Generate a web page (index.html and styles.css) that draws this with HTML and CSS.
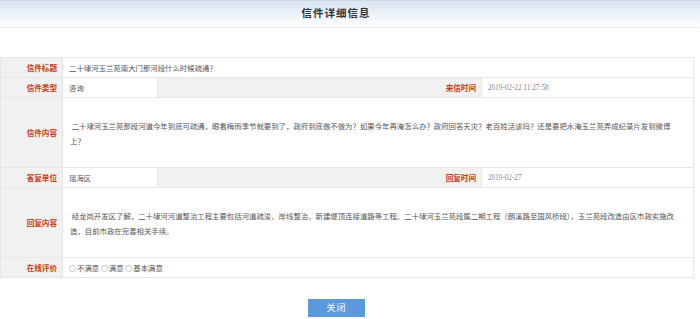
FILE: index.html
```html
<!DOCTYPE html>
<html lang="zh-CN">
<head>
    <meta charset="UTF-8" />
    <title>信件详细信息</title>
    <link rel="stylesheet" href="styles.css">
</head>
<body>
<div class="head">信件详细信息</div>

<table class="detail">
    <colgroup>
        <col style="width:62px">
        <col style="width:95px">
        <col style="width:324px">
        <col>
    </colgroup>
    <tr class="row-s">
        <th>信件标题</th>
        <td colspan="3">二十埭河玉兰苑南大门那河段什么时候疏通？</td>
    </tr>
    <tr class="row-s">
        <th>信件类型</th>
        <td>咨询</td>
        <th>来信时间</th>
        <td class="date">2019-02-22 11:27:58</td>
    </tr>
    <tr class="row-l">
        <th>信件内容</th>
        <td colspan="3" class="text">&nbsp;二十埭河玉兰苑那段河道今年到底可疏通，眼看梅雨季节就要到了，政府到底做不做为？如果今年再淹怎么办？政府回答天灾？老百姓活该吗？还是要把水淹玉兰苑弄成纪录片发到微博上？</td>
    </tr>
    <tr class="row-s">
        <th>答复单位</th>
        <td>瑶海区</td>
        <th>回复时间</th>
        <td class="date">2019-02-27</td>
    </tr>
    <tr class="row-l">
        <th>回复内容</th>
        <td colspan="3" class="text">&nbsp;经龙岗开发区了解，二十埭河河道整治工程主要包括河道疏浚、岸线整治、新建堤顶连接道路等工程。二十埭河玉兰苑段属二期工程（朗溪路至国风桥段），玉兰苑段改造由区市政实施改造，目前市政在完善相关手续。</td>
    </tr>
    <tr class="row-s">
        <th>在线评价</th>
        <td colspan="3" class="rate">
            <label><input type="radio" name="rate">不满意</label>
            <label><input type="radio" name="rate">满意</label>
            <label><input type="radio" name="rate">基本满意</label>
        </td>
    </tr>
</table>

<div class="actions">
    <button class="close-btn">关闭</button>
</div>
</body>
</html>
```

FILE: styles.css
```css
body {
    margin: 0;
    font-family: "Noto Sans CJK SC", "Noto Sans", sans-serif;
    background: #fff;
    color: #555;
}
.head {
    height: 26px;
    line-height: 24px;
    padding-right: 28px;
    border-top: 1px solid #c9d9ec;
    border-bottom: 1px solid #eef2f7;
    background: linear-gradient(#d9e5f2, #ffffff);
    text-align: center;
    font-size: 10.5px;
    font-weight: bold;
    letter-spacing: 1px;
    color: #333;
}
.detail {
    margin-top: 29px;
    width: 694px;
    border-collapse: collapse;
    table-layout: fixed;
    font-size: 7.4px;
}
.detail th, .detail td {
    border: 1px solid #e6e6e6;
    padding: 0 6px;
    vertical-align: middle;
}
.detail th {
    background: #f1f1f1;
    color: #c63c14;
    text-align: right;
    font-weight: bold;
    font-size: 7.6px;
    padding-right: 5px;
}
.detail td {
    color: #555;
    text-align: left;
}
.row-s { height: 20px; }
.row-l { height: 70px; }
.detail td.text {
    line-height: 15px;
    padding: 0 10px 0 7px;
}
.detail td.date {
    font-family: "Liberation Serif", serif;
    font-size: 7.2px;
    color: #888;
}
.rate label {
    margin-right: 0;
}
.rate input {
    appearance: none;
    width: 7px;
    height: 7px;
    margin: 0 1px 0 0;
    border: 1px solid #c9c9c9;
    border-radius: 50%;
    vertical-align: -1px;
    background: #fff;
}
.actions {
    padding: 14px 0 0 308px;
}
.close-btn {
    width: 57px;
    height: 18px;
    border: none;
    background: #5b9bdd;
    color: #fff;
    font-family: "Noto Sans CJK SC", sans-serif;
    font-size: 9px;
    letter-spacing: 1px;
    padding: 0;
}
```
